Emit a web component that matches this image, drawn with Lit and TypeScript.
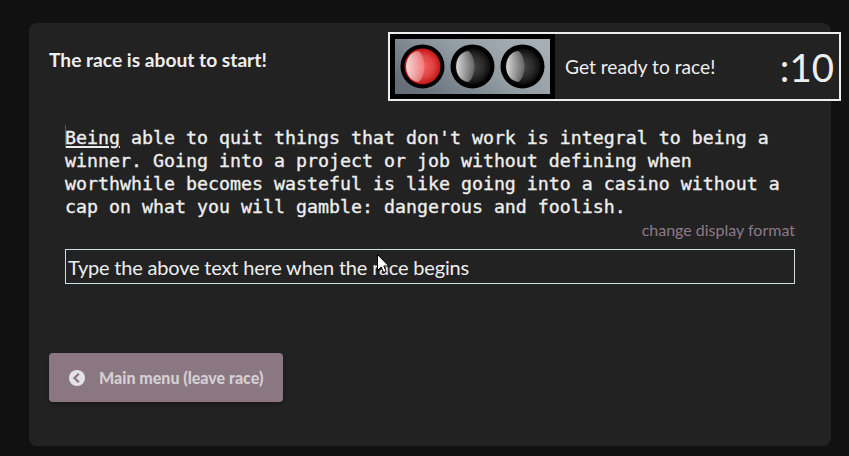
import { LitElement, html, css, svg } from "lit";
import { customElement, property } from "lit/decorators.js";

@customElement("traffic-light")
class TrafficLight extends LitElement {
  @property({ type: Number }) active = 0;

  static styles = css`
    :host { display: block; width: 165px; height: 65px; box-sizing: border-box; border: 5px solid #000; flex: none; }
    svg { display: block; }
  `;

  render() {
    return html`<svg width="155" height="55" viewBox="0 0 155 55">
      <defs>
        <linearGradient id="plate" x1="0" y1="0.75" x2="1" y2="0.25">
          <stop offset="0" stop-color="#656e76" />
          <stop offset="0.55" stop-color="#929ca3" />
          <stop offset="1" stop-color="#a7afb6" />
        </linearGradient>
        <radialGradient id="red">
          <stop offset="0" stop-color="#f86060" />
          <stop offset="0.6" stop-color="#e04444" />
          <stop offset="1" stop-color="#c41414" />
        </radialGradient>
        <radialGradient id="off">
          <stop offset="0" stop-color="#484848" />
          <stop offset="0.6" stop-color="#2b2b2b" />
          <stop offset="1" stop-color="#0c0c0c" />
        </radialGradient>
        <linearGradient id="shine">
          <stop offset="0" stop-color="#fff" stop-opacity="0.85" />
          <stop offset="1" stop-color="#fff" stop-opacity="0.18" />
        </linearGradient>
      </defs>
      <rect width="155" height="55" fill="url(#plate)" />
      ${[0, 1, 2].map((i) => {
        const x = 27.5 + i * 50;
        return svg`
          <circle cx=${x} cy="27.4" r="22" fill="#000" />
          <circle cx=${x} cy="27.4" r="18" fill=${i === this.active ? "url(#red)" : "url(#off)"} />
          <path transform="translate(${x} 27.4)" d="M-4 -15.5C-20.5 -14 -20.5 14 -4 15.5C4 10 4 -10 -4 -15.5Z" fill="url(#shine)" />`;
      })}
    </svg>`;
  }
}

@customElement("app-root")
class AppRoot extends LitElement {
  static styles = css`
    :host { display: block; box-sizing: border-box; width: 849px; height: 456px; padding: 23px 18px 10px 29px;
      background: #111; color: #eee; font-family: Lato, sans-serif; overflow: hidden; }
    .panel { position: relative; box-sizing: border-box; height: 423px; padding: 25px 20px 44px;
      background: #222; border-radius: 8px; display: flex; flex-direction: column; align-items: flex-start; }
    h1 { margin: 0; font-size: 19.2px; line-height: 24px; font-weight: 700; white-space: nowrap; }
    .popup { position: absolute; left: 359px; top: 9px; width: 453px; height: 69px; box-sizing: border-box;
      border: 2px solid #eee; background: #222; display: flex; align-items: center; }
    .status { margin: 1px 0 0 10px; font-size: 19.2px; line-height: 24px; white-space: nowrap; }
    .timer { margin-left: auto; padding-right: 5px; font-size: 38.4px; line-height: 48px; }
    .race { margin: 54px 0 0 16px; width: 730px; display: flex; flex-direction: column; }
    .text { position: relative; font: 18.27px/23px "DejaVu Sans Mono", monospace; white-space: pre; -webkit-text-stroke: 0.35px #eee; }
    .text div { height: 23px; }
    .caret { position: absolute; left: 0; top: -1px; width: 1px; height: 23px; background: #466; }
    .word { text-decoration: underline; text-decoration-thickness: 1.5px; text-underline-offset: 2px; text-decoration-skip-ink: auto; }
    .format { align-self: flex-end; margin-top: 2px; font-size: 16px; line-height: 20px; color: #8e7986; }
    .entry { position: relative; margin-top: 9px; height: 35px; box-sizing: border-box; border: 1px solid #cde0e6;
      padding: 1px 2px; font-size: 20px; letter-spacing: -0.19px; line-height: 33px; white-space: nowrap; }
    .cursor { position: absolute; left: 311px; top: 4px; }
    .leave { margin-top: auto; width: 234px; height: 49px; box-sizing: border-box; padding-left: 20px;
      display: flex; align-items: center; gap: 14px; border-radius: 4px; background: #8b7782;
      box-shadow: 0 2px 4px rgba(0, 0, 0, 0.3); color: #d3d0d2; font-size: 16px; font-weight: 900; white-space: nowrap; }
  `;

  private lines = [
    " able to quit things that don't work is integral to being a",
    "winner. Going into a project or job without defining when",
    "worthwhile becomes wasteful is like going into a casino without a",
    "cap on what you will gamble: dangerous and foolish.",
  ];

  render() {
    return html`<div class="panel">
      <h1>The race is about to start!</h1>
      <div class="race">
        <div class="text"><span class="caret"></span>${this.lines.map(
          (line, i) => html`<div>${i === 0 ? html`<span class="word">Being</span>` : ""}${line}</div>`
        )}</div>
        <div class="format">change display format</div>
        <div class="entry">Type the above text here when the race begins
          <svg class="cursor" width="14" height="21" viewBox="0 0 14 21">
            <path d="M.5 .5V16.5L4.2 13L6.6 18.5L9.2 17.4L6.8 12H11.7Z" fill="#fff" stroke="#000" stroke-width="1" />
          </svg>
        </div>
      </div>
      <div class="leave">
        <svg width="16" height="16" viewBox="0 0 16 16">
          <circle cx="8" cy="8" r="8" fill="#e5e3e4" />
          <path d="M9.8 3.7L5.5 8L9.8 12.3" fill="none" stroke="#8b7782" stroke-width="2.3" />
        </svg>
        <span>Main menu (leave race)</span>
      </div>
      <div class="popup">
        <traffic-light .active=${0}></traffic-light>
        <div class="status">Get ready to race!</div>
        <div class="timer">:10</div>
      </div>
    </div>`;
  }
}
